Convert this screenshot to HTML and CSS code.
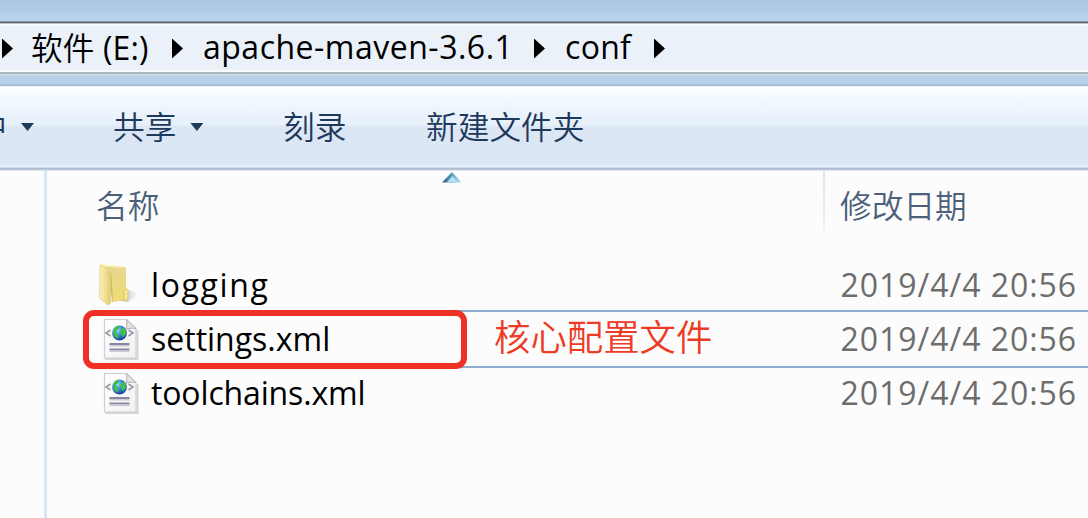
FILE: index.html
```html
<!DOCTYPE html>
<html lang="zh-CN">
<head>
<meta charset="utf-8">
<title>conf</title>
<link rel="stylesheet" href="styles.css">
</head>
<body>
<svg class="defs" width="0" height="0" aria-hidden="true">
  <defs>
    <linearGradient id="paper" x1="0" y1="0" x2="1" y2="1"><stop offset="0" stop-color="#fff"/><stop offset="1" stop-color="#f1f1f3"/></linearGradient>
    <radialGradient id="sea" cx=".35" cy=".3" r=".75"><stop offset="0" stop-color="#a5def7"/><stop offset=".45" stop-color="#3a8ee0"/><stop offset="1" stop-color="#173c98"/></radialGradient>
    <symbol id="xml" viewBox="0 0 36 42">
      <path d="M2 41h32.500V12" fill="none" stroke="#c4c4c6" stroke-width="2" opacity=".7"/>
      <path d="M1.500 1.500h22l9.500 9v29.500h-31.500z" fill="url(#paper)" stroke="#cfcfd1" stroke-width="1.200"/>
      <path d="M23.500 1.500q1 6-.5 9.500 5-1.500 10-.5z" fill="#e4e4e6" stroke="#b4b4b8"/>
      <path d="M7.500 12L3 15l4.500 3M25.500 12l4.500 3-4.500 3" fill="none" stroke="#9a9aa8" stroke-width="1.600"/>
      <circle cx="16.500" cy="15" r="7.400" fill="url(#sea)"/>
      <path d="M10.500 11q2.500-3.500 6-3.200l-1 3.200-2.500 1.500 1 3.500 2 1.500-1.500 3q-3-1-4-4zM19 10.500l3-.5q1.500 3 1 6l-3 3.500-1.500-3-1.500-3z" fill="#42bf48"/>
      <path d="M6.500 26h20M6.500 31.500h20" stroke="#8b86a4" stroke-width="1.800"/>
      <path d="M6.500 27.700h20M6.500 33.200h20" stroke="#cbc8d5" stroke-width="1.500"/>
    </symbol>
  </defs>
</svg>
<main class="window">
  <div class="glass"></div>
  <nav class="address">
    <i class="arrow"></i>
    <span class="crumb drive">软件<span class="letter"> (E:)</span></span>
    <i class="arrow"></i>
    <span class="crumb maven">apache-maven-3.6.1</span>
    <i class="arrow"></i>
    <span class="crumb conf">conf</span>
    <i class="arrow"></i>
  </nav>
  <div class="strip"></div>
  <div class="toolbar">
    <span class="tool library"><span class="cut">中</span><i class="drop"></i></span>
    <span class="tool share"><span class="label">共享</span><i class="drop"></i></span>
    <span class="tool burn"><span class="label">刻录</span></span>
    <span class="tool"><span class="label">新建文件夹</span></span>
  </div>
  <div class="content">
    <aside class="side"></aside>
    <section class="files">
      <header class="head">
        <div class="col-name">名称
          <svg class="sort" width="20" height="11" viewBox="0 0 20 11"><defs><linearGradient id="tri"><stop offset="0" stop-color="#2c5b7b"/><stop offset=".5" stop-color="#5f9dbd"/><stop offset="1" stop-color="#cdeefa"/></linearGradient></defs><path d="M0 10.500L10 0l10 10.500z" fill="url(#tri)"/><path d="M5 10l5.500-6 5 6z" fill="#b0e2f7"/></svg>
        </div>
        <div class="col-date">修改日期</div>
      </header>
      <div class="row">
        <div class="file">
          <svg class="icon folder" width="40" height="42" viewBox="0 0 40 42"><defs><linearGradient id="f1"><stop offset="0" stop-color="#faf0bb"/><stop offset=".55" stop-color="#f1df92"/><stop offset="1" stop-color="#e3ca70"/></linearGradient><linearGradient id="f2" x2="0" y2="1"><stop offset="0" stop-color="#e6d592"/><stop offset="1" stop-color="#f0dc72"/></linearGradient><linearGradient id="sh"><stop offset=".3" stop-color="#aaa" stop-opacity=".8"/><stop offset="1" stop-color="#ccc" stop-opacity="0"/></linearGradient></defs><path d="M17 36l13-10 10 4-11 8z" fill="url(#sh)"/><path d="M2 1l23 2q2 0 2 2v19l2 2v9l-14 3z" fill="url(#f2)"/><path d="M3 1.500l21 1.500" stroke="#faf0b8" stroke-width="2"/><path d="M11.500 9l2 29" stroke="#c3a958" stroke-width="1.500" opacity=".7"/><path d="M1 2q0-2 2-1l7 6q1.500 2 1.500 5v27q-1 3-4 1l-7-6z" fill="url(#f1)" stroke="#e4cd78" stroke-width=".7"/><path d="M25 27q0-2 2-2t2 2v7q0 2-4 3z" fill="#f5e89b" stroke="#dac056" stroke-width=".8"/></svg>
          <span class="name logging">logging</span>
        </div>
        <time>2019/4/4 20:56</time>
      </div>
      <div class="row selected">
        <div class="file marked">
          <svg class="icon" width="36" height="42"><use href="#xml"/></svg>
          <span class="name settings">settings.xml</span>
        </div>
        <span class="note">核心配置文件</span>
        <time>2019/4/4 20:56</time>
      </div>
      <div class="row">
        <div class="file">
          <svg class="icon" width="36" height="42"><use href="#xml"/></svg>
          <span class="name toolchains">toolchains.xml</span>
        </div>
        <time>2019/4/4 20:56</time>
      </div>
    </section>
  </div>
</main>
</body>
</html>
```
FILE: styles.css
```css
* { box-sizing: border-box; }
body { margin: 0; font: 32px/40px "Open Sans", "Noto Sans CJK SC", sans-serif; color: #000; }
.defs { position: absolute; }
.window { width: 1088px; height: 518px; overflow: hidden; display: flex; flex-direction: column; background: #fcfcfc; white-space: nowrap; }
.glass { height: 21px; flex: none; background: linear-gradient(#abc7e0, #b0cae4 40%, #b9d1ec 75%, #b9d1ea); }
.address { height: 54px; flex: none; display: flex; align-items: center; border-top: 1px solid #8e9aa6; border-bottom: 1px solid #d0e0ea; background: linear-gradient(#5a636b 1px, #b8bfc4 1px 2px, #f8fbfd 2px 3px, #eaf1f9 4px 48px, #f8fafc 48px 50px, #a9b5bf 50px 52px); padding: 0 0 3px 2px; }
.arrow { width: 11px; height: 20px; margin-top: 4px; flex: none; background: #000; clip-path: polygon(0 0, 100% 50%, 0 100%); }
.crumb { flex: none; }
.drive { width: 141px; margin-left: 18px; font: 350 31.700px/40px "Noto Sans CJK SC", sans-serif; }
.letter { font: 400 32px/40px "Open Sans", sans-serif; letter-spacing: .2px; }
.maven { width: 331px; margin-left: 20px; letter-spacing: .5px; }
.conf { width: 88px; margin-left: 20px; letter-spacing: .3px; }
.conf + .arrow { margin-left: 1px; }
.strip { height: 12px; flex: none; background: linear-gradient(#c6d9eb 1px, #b9d0e9 1px 9px, #a9bdd8 9px 11px, #eaf0f6 11px); }
.toolbar { height: 84px; flex: none; display: flex; align-items: center; color: #1e395b; background: linear-gradient(#fdfeff, #f2f8fe 11px, #e6f0fa 38px, #dce6f4 40px, #dbe7f5 77px, #e7eff9 79px 80px, #b6c5da 81px, #9eadc3 82px, #dce3eb 83px); font: 350 31.700px/40px "Noto Sans CJK SC", sans-serif; }
.tool { display: flex; align-items: center; flex: none; height: 40px; margin-bottom: 4px; }
.label { margin-bottom: 4px; }
.library { width: 113px; gap: 14px; }
.cut { width: 7px; display: flex; justify-content: flex-end; overflow: hidden; margin-bottom: 4px; }
.share { width: 170px; gap: 14px; }
.burn { width: 143px; }
.drop { width: 13px; height: 8px; background: #1e395b; clip-path: polygon(0 0, 100% 0, 50% 100%); }
.content { flex: 1; display: flex; }
.side { width: 47px; border-right: 3px solid #d8e7f6; }
.files { flex: 1; }
.head { height: 87px; display: flex; color: #4c607a; font: 350 31.700px/40px "Noto Sans CJK SC", sans-serif; }
.col-name { position: relative; width: 776px; padding: 13px 0 0 49px; }
.sort { position: absolute; left: 395px; top: 1px; }
.col-date { height: 64px; padding: 13px 0 0 15px; border-left: 2px solid; border-image: linear-gradient(#dbe9f5, #e0edf7 70%, #fcfcfc) 1; }
.row { height: 54px; margin-left: 36px; display: flex; align-items: center; }
.selected { height: 58px; margin: -2px 0 -2px 36px; background: linear-gradient(#8dadd2, #8dadd2) 10px 0 / 100% 2px no-repeat, linear-gradient(#8dadd2, #8dadd2) 10px 56px / 100% 2px no-repeat; }
.file { width: 384px; height: 59px; flex: none; display: flex; align-items: center; padding-left: 20px; }
.marked { border: 6px solid #ee3124; border-radius: 11px; padding-left: 14px; }
.icon { flex: none; margin-right: 12px; }
.folder { margin-left: -4px; }
.logging { letter-spacing: 1.600px; }
.toolchains { letter-spacing: -.150px; }
.note { margin: 0 0 8px 27px; color: #ee3b25; font: 350 36.400px/40px "Noto Sans CJK SC", sans-serif; }
time { margin-left: auto; margin-right: 11px; color: #6d6d6d; letter-spacing: .950px; }
```
